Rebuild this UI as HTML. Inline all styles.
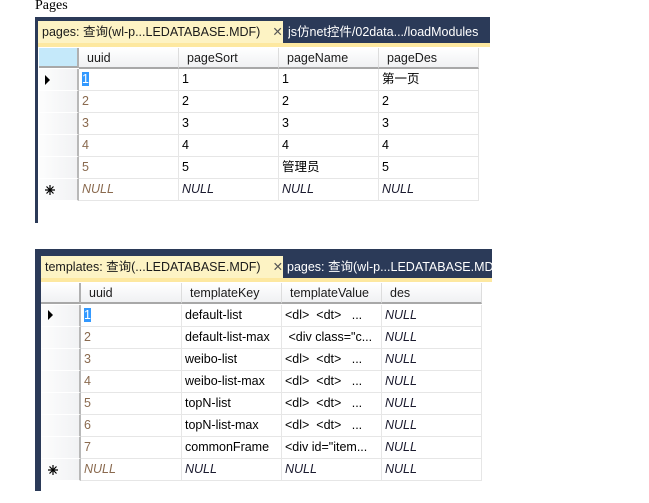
<!DOCTYPE html>
<html><head><meta charset="utf-8"><style>
*{margin:0;padding:0;box-sizing:border-box}
body{width:649px;height:503px;background:#fff;position:relative;overflow:hidden;font-family:"Liberation Sans","Noto Sans CJK SC",sans-serif;font-size:12.5px;color:#000}
.a{position:absolute}
.navy{background:#2b3a58}
.tab{background:#fdf3c4;color:#1a1a1a;font-size:12.5px;line-height:22px;padding-left:4px;white-space:nowrap;overflow:hidden}
.tab2{color:#fff;font-size:12.5px;line-height:22px;white-space:nowrap;overflow:hidden}
.ystrip{background:#fde8a0}
.hdr{background:linear-gradient(#fff,#f0f1f3);border-right:1px solid #ddd;border-bottom:2px solid #a8a8a8;line-height:20px;padding-left:8px;color:#1a1a1a}
.cell{border-right:1px solid #e6e6e6;border-bottom:1px solid #e6e6e6;line-height:21px;padding-left:3px;white-space:nowrap;overflow:hidden}
.rh{background:linear-gradient(90deg,#fdfdfd,#f1f2f4);border-bottom:1px solid #fff;border-right:2px solid #b8b8b8;position:relative}
.u{color:#8a6a4f}
.n{font-style:italic;color:#1a1a2e}
.nu{font-style:italic;color:#8a6a4f}
.sel{background:#3399ff;color:#fff}
.tri{width:0;height:0;border-top:5px solid transparent;border-bottom:5px solid transparent;border-left:5px solid #000}
</style></head><body>
<div class="a" style="left:35px;top:-2px;font-family:'Liberation Serif',serif;font-size:14px">Pages</div>

<!-- panel 1 -->
<div class="a navy" style="left:35px;top:17px;width:455px;height:30px"></div>
<div class="a navy" style="left:35px;top:17px;width:3px;height:206px"></div>
<div class="a tab" style="left:38px;top:21px;width:245px;height:24px">pages: 查询(wl-p...LEDATABASE.MDF)<span style="margin-left:12px;color:#555">✕</span></div>
<div class="a tab2" style="left:288px;top:21px;width:202px;height:24px">js仿net控件/02data.../loadModules</div>
<div class="a ystrip" style="left:38px;top:43px;width:452px;height:4px"></div>
<div class="a" style="left:38px;top:47px;width:441px;height:153px;background:#fff">
 <div class="a" style="left:1px;top:1px;width:40px;height:20px;background:#c5e9fa;border-right:2px solid #b0b0b0;border-bottom:2px solid #a8a8a8"></div>
 <div class="a hdr" style="left:41px;top:1px;width:100px;height:21px">uuid</div>
 <div class="a hdr" style="left:141px;top:1px;width:100px;height:21px">pageSort</div>
 <div class="a hdr" style="left:241px;top:1px;width:100px;height:21px">pageName</div>
 <div class="a hdr" style="left:341px;top:1px;width:100px;height:21px">pageDes</div>
</div>

<!-- panel 2 -->
<div class="a navy" style="left:35px;top:249px;width:457px;height:33px"></div>
<div class="a navy" style="left:35px;top:249px;width:6px;height:242px"></div>
<div class="a tab" style="left:41px;top:256px;width:242px;height:23px">templates: 查询(...LEDATABASE.MDF)<span style="margin-left:12px;color:#555">✕</span></div>
<div class="a tab2" style="left:287px;top:256px;width:205px;height:23px">pages: 查询(wl-p...LEDATABASE.MDF</div>
<div class="a ystrip" style="left:41px;top:278px;width:451px;height:4px"></div>
<div class="a" style="left:41px;top:282px;width:442px;height:199px;background:#fff">
 <div class="a" style="left:0;top:1px;width:40px;height:21px;background:linear-gradient(#fff,#f0f1f3);border-right:2px solid #b0b0b0;border-bottom:2px solid #a8a8a8"></div>
 <div class="a hdr" style="left:40px;top:1px;width:101px;height:21px">uuid</div>
 <div class="a hdr" style="left:141px;top:1px;width:100px;height:21px">templateKey</div>
 <div class="a hdr" style="left:241px;top:1px;width:100px;height:21px">templateValue</div>
 <div class="a hdr" style="left:341px;top:1px;width:100px;height:21px">des</div>
</div>

<!-- rows panel 1 -->
<div class="a" style="left:39px;top:69px;width:440px">
 <div style="display:flex;height:22px"><div class="rh" style="width:40px"><div class="tri a" style="left:6px;top:6px"></div></div><div class="cell" style="width:100px"><span class="sel">1</span></div><div class="cell" style="width:100px">1</div><div class="cell" style="width:100px">1</div><div class="cell" style="width:100px">第一页</div></div>
 <div style="display:flex;height:22px"><div class="rh" style="width:40px"></div><div class="cell u" style="width:100px">2</div><div class="cell" style="width:100px">2</div><div class="cell" style="width:100px">2</div><div class="cell" style="width:100px">2</div></div>
 <div style="display:flex;height:22px"><div class="rh" style="width:40px"></div><div class="cell u" style="width:100px">3</div><div class="cell" style="width:100px">3</div><div class="cell" style="width:100px">3</div><div class="cell" style="width:100px">3</div></div>
 <div style="display:flex;height:22px"><div class="rh" style="width:40px"></div><div class="cell u" style="width:100px">4</div><div class="cell" style="width:100px">4</div><div class="cell" style="width:100px">4</div><div class="cell" style="width:100px">4</div></div>
 <div style="display:flex;height:22px"><div class="rh" style="width:40px"></div><div class="cell u" style="width:100px">5</div><div class="cell" style="width:100px">5</div><div class="cell" style="width:100px">管理员</div><div class="cell" style="width:100px">5</div></div>
 <div style="display:flex;height:22px"><div class="rh" style="width:40px"><svg class="a" style="left:6px;top:6px" width="10" height="10" viewBox="0 0 10 10" stroke="#000" stroke-width="1.2"><path d="M5 0V10M0 5H10M1.5 1.5L8.5 8.5M8.5 1.5L1.5 8.5"/></svg></div><div class="cell nu" style="width:100px">NULL</div><div class="cell n" style="width:100px">NULL</div><div class="cell n" style="width:100px">NULL</div><div class="cell n" style="width:100px">NULL</div></div>
</div>

<!-- rows panel 2 -->
<div class="a" style="left:41px;top:305px;width:441px">
 <div style="display:flex;height:22px"><div class="rh" style="width:40px"><div class="tri a" style="left:7px;top:5px"></div></div><div class="cell" style="width:101px"><span class="sel">1</span></div><div class="cell" style="width:100px">default-list</div><div class="cell" style="width:100px">&lt;dl&gt;&nbsp;&nbsp;&lt;dt&gt;&nbsp;&nbsp;&nbsp;...</div><div class="cell n" style="width:100px">NULL</div></div>
 <div style="display:flex;height:22px"><div class="rh" style="width:40px"></div><div class="cell u" style="width:101px">2</div><div class="cell" style="width:100px">default-list-max</div><div class="cell" style="width:100px">&nbsp;&lt;div class="c...</div><div class="cell n" style="width:100px">NULL</div></div>
 <div style="display:flex;height:22px"><div class="rh" style="width:40px"></div><div class="cell u" style="width:101px">3</div><div class="cell" style="width:100px">weibo-list</div><div class="cell" style="width:100px">&lt;dl&gt;&nbsp;&nbsp;&lt;dt&gt;&nbsp;&nbsp;&nbsp;...</div><div class="cell n" style="width:100px">NULL</div></div>
 <div style="display:flex;height:22px"><div class="rh" style="width:40px"></div><div class="cell u" style="width:101px">4</div><div class="cell" style="width:100px">weibo-list-max</div><div class="cell" style="width:100px">&lt;dl&gt;&nbsp;&nbsp;&lt;dt&gt;&nbsp;&nbsp;&nbsp;...</div><div class="cell n" style="width:100px">NULL</div></div>
 <div style="display:flex;height:22px"><div class="rh" style="width:40px"></div><div class="cell u" style="width:101px">5</div><div class="cell" style="width:100px">topN-list</div><div class="cell" style="width:100px">&lt;dl&gt;&nbsp;&nbsp;&lt;dt&gt;&nbsp;&nbsp;&nbsp;...</div><div class="cell n" style="width:100px">NULL</div></div>
 <div style="display:flex;height:22px"><div class="rh" style="width:40px"></div><div class="cell u" style="width:101px">6</div><div class="cell" style="width:100px">topN-list-max</div><div class="cell" style="width:100px">&lt;dl&gt;&nbsp;&nbsp;&lt;dt&gt;&nbsp;&nbsp;&nbsp;...</div><div class="cell n" style="width:100px">NULL</div></div>
 <div style="display:flex;height:22px"><div class="rh" style="width:40px"></div><div class="cell u" style="width:101px">7</div><div class="cell" style="width:100px">commonFrame</div><div class="cell" style="width:100px">&lt;div id="item...</div><div class="cell n" style="width:100px">NULL</div></div>
 <div style="display:flex;height:22px"><div class="rh" style="width:40px"><svg class="a" style="left:7px;top:6px" width="10" height="10" viewBox="0 0 10 10" stroke="#000" stroke-width="1.2"><path d="M5 0V10M0 5H10M1.5 1.5L8.5 8.5M8.5 1.5L1.5 8.5"/></svg></div><div class="cell nu" style="width:101px">NULL</div><div class="cell n" style="width:100px">NULL</div><div class="cell n" style="width:100px">NULL</div><div class="cell n" style="width:100px">NULL</div></div>
</div>
</body></html>
